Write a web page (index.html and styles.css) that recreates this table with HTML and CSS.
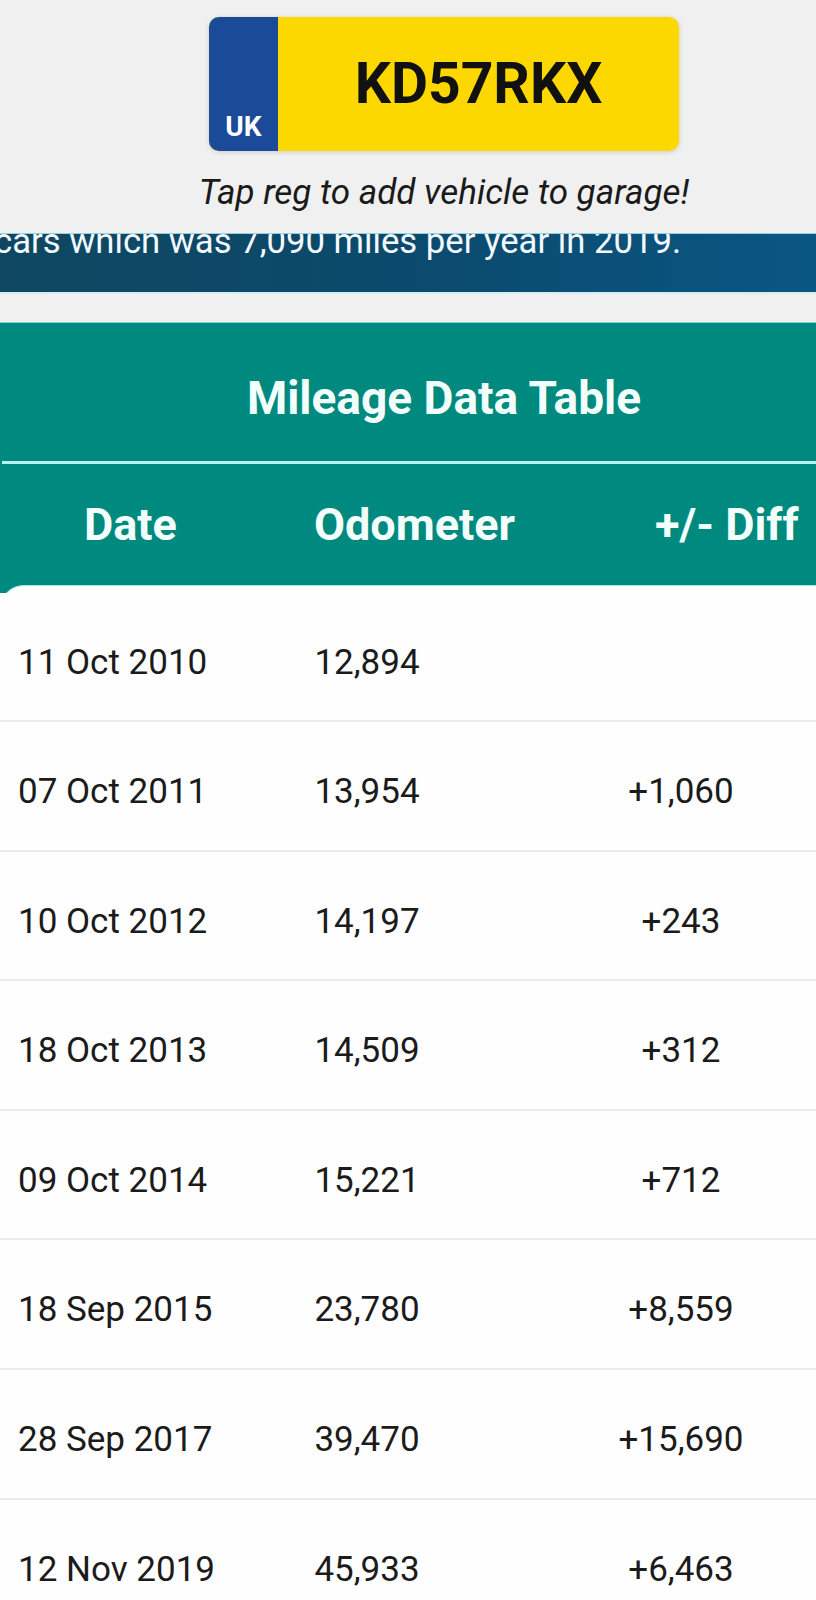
FILE: index.html
```html
<!DOCTYPE html>
<html lang="en">
<head>
<meta charset="utf-8">
<title>Mileage Data</title>
<link rel="stylesheet" href="styles.css">
</head>
<body>
<div class="page">
  <header class="reg-header">
    <div class="plate">
      <div class="plate-flag"><span>UK</span></div>
      <div class="plate-number">KD57RKX</div>
    </div>
    <p class="hint">Tap reg to add vehicle to garage!</p>
  </header>

  <div class="banner">
    <p class="banner-text">cars which was 7,090 miles per year in 2019.</p>
  </div>

  <section class="table-card">
    <h2 class="table-title">Mileage Data Table</h2>
    <div class="divider"></div>
    <div class="col-heads">
      <span>Date</span>
      <span>Odometer</span>
      <span>+/- Diff</span>
    </div>
    <div class="rows">
      <div class="row"><span class="c-date">11 Oct 2010</span><span class="c-odo">12,894</span><span class="c-diff"></span></div>
      <div class="row"><span class="c-date">07 Oct 2011</span><span class="c-odo">13,954</span><span class="c-diff">+1,060</span></div>
      <div class="row"><span class="c-date">10 Oct 2012</span><span class="c-odo">14,197</span><span class="c-diff">+243</span></div>
      <div class="row"><span class="c-date">18 Oct 2013</span><span class="c-odo">14,509</span><span class="c-diff">+312</span></div>
      <div class="row"><span class="c-date">09 Oct 2014</span><span class="c-odo">15,221</span><span class="c-diff">+712</span></div>
      <div class="row"><span class="c-date">18 Sep 2015</span><span class="c-odo">23,780</span><span class="c-diff">+8,559</span></div>
      <div class="row"><span class="c-date">28 Sep 2017</span><span class="c-odo">39,470</span><span class="c-diff">+15,690</span></div>
      <div class="row"><span class="c-date">12 Nov 2019</span><span class="c-odo">45,933</span><span class="c-diff">+6,463</span></div>
    </div>
  </section>
</div>
</body>
</html>
```
FILE: styles.css
```css
html, body {
  margin: 0;
  padding: 0;
  overflow: hidden;
  background: #f0f0f0;
}

body {
  font-family: Roboto, "Liberation Sans", Arial, sans-serif;
  color: #1b1b1b;
}

.page {
  width: 888px;
}

/* ---------- registration header ---------- */
.reg-header {
  background: #f0f0f0;
  padding-top: 17px;
  height: 216px;
  display: flex;
  flex-direction: column;
  align-items: center;
}

.plate {
  width: 470px;
  height: 134px;
  display: flex;
  border-radius: 10px;
  overflow: hidden;
  background: #fdd800;
  box-shadow: 0 1px 5px rgba(0, 0, 0, 0.16);
}

.plate-flag {
  width: 69px;
  background: #1a4a98;
  display: flex;
  align-items: flex-end;
  justify-content: center;
  padding-bottom: 8px;
  box-sizing: border-box;
}

.plate-flag span {
  color: #ffffff;
  font-weight: 700;
  font-size: 28px;
  line-height: 33px;
}

.plate-number {
  flex: 1;
  display: flex;
  align-items: center;
  justify-content: center;
  font-weight: 700;
  font-size: 57px;
  color: #111111;
  padding-bottom: 2px;
}

.hint {
  margin: 20.5px 0 0;
  font-style: italic;
  font-size: 35px;
  line-height: 41px;
  color: #1a1a1a;
}

/* ---------- info banner ---------- */
.banner {
  height: 58px;
  overflow: hidden;
  border-top: 1px solid #8fd2e2;
  border-bottom: 2px solid #d4eef5;
  background: linear-gradient(90deg, #0f4760 0%, #0b4a6c 45%, #0a5887 100%);
}

.banner-text {
  margin: -13px 0 0 -6px;
  font-size: 34.7px;
  line-height: 41px;
  color: #f3f9ff;
  white-space: nowrap;
}

/* ---------- mileage table ---------- */
.table-card {
  margin-top: 28px;
  background: #00897f;
  border-top: 1px solid #7fd6cf;
}

.table-title {
  margin: 0;
  padding-top: 49px;
  font-weight: 700;
  font-size: 46px;
  line-height: 53px;
  text-align: center;
  color: #f2fffd;
}

.divider {
  margin: 36px 0 0 2px;
  height: 3px;
  background: #b6f3ee;
}

.col-heads {
  display: grid;
  grid-template-columns: 230px 341px auto;
  padding: 34px 0 34px 84px;
  font-weight: 700;
  font-size: 45px;
  line-height: 53px;
  color: #f2fffd;
}

.rows {
  background: #ffffff;
  border-top: 1px solid #a9ebe5;
  border-top-left-radius: 24px;
  padding-top: 6.5px;
}

.row {
  display: grid;
  grid-template-columns: 242px 214px 1fr;
  padding: 49px 0 37.6px 18px;
  border-bottom: 2px solid #ebebeb;
  font-size: 35px;
  line-height: 41px;
  color: #1b1b1b;
  background: #fefefe;
}

.c-odo,
.c-diff {
  text-align: center;
}
```
